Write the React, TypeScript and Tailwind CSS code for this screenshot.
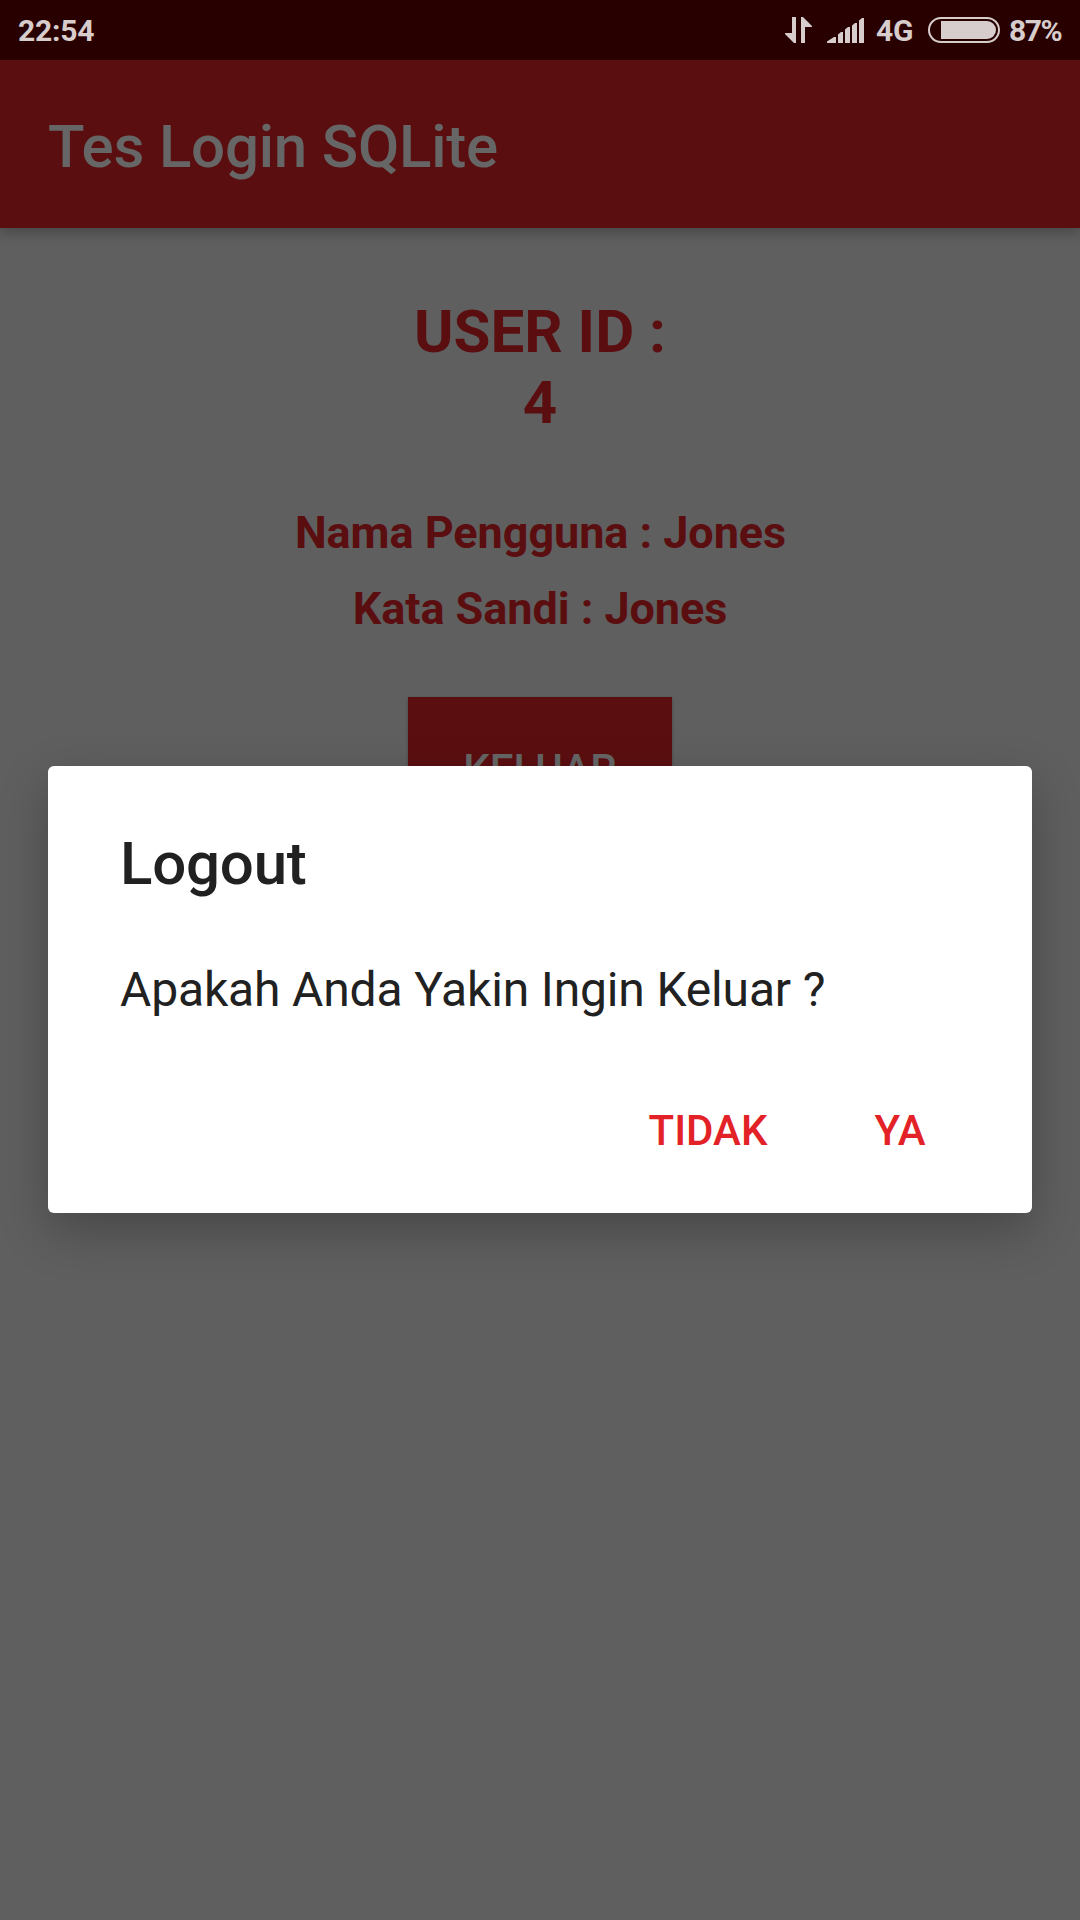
function StatusBar() {
  return (
    <div className="flex h-[60px] items-center justify-between bg-[#290000] pr-[17px] pl-[18px] text-[30px] leading-[60px] font-bold tracking-[-0.2px] text-[#d7cdcd]">
      <span className="pt-px">22:54</span>
      <div className="flex items-center whitespace-nowrap">
        <svg className="mr-[15px] h-[26px] w-[27px]" viewBox="0 0 27 26" fill="currentColor">
          <path d="M7 0h4v26h-2L0 17v-1h7z" />
          <path d="M20 26h-4V0h2l9 9v1h-7z" />
        </svg>
        <svg className="mr-[12px] h-[26px] w-[37px]" viewBox="0 0 37 26" fill="currentColor">
          <path d="M0 26v-1.500l7-4.500h2v6z" />
          <path d="M11 26v-8.500l3-2.500h2v11z" />
          <path d="M18 26V12.500l3-2.500h2v16z" />
          <path d="M25 26V8.500l3-2.500h2v20z" />
          <path d="M32 26V3.500l3-2.500h2v25z" />
        </svg>
        <span className="w-[38px] pt-px">4G</span>
        <svg className="mr-[9px] ml-[14px] h-[26px] w-[72px]" viewBox="0 0 72 26">
          <rect x="1" y="1" width="70" height="24" rx="12" fill="none" stroke="currentColor" strokeWidth="2" />
          <path d="M13 4h46a9 9 0 0 1 0 18H13z" fill="currentColor" />
        </svg>
        <span className="w-[54px] pt-px tracking-[-1.500px]">87%</span>
      </div>
    </div>
  );
}

function LogoutDialog() {
  return (
    <div className="absolute top-[766px] left-[48px] flex h-[447px] w-[984px] flex-col rounded-[6px] bg-white text-[#212121] shadow-[0_18px_48px_rgba(0,0,0,0.25)]">
      <h2 className="mt-[62px] px-[72px] text-[60px] leading-[72px] font-medium tracking-[-0.2px]">Logout</h2>
      <p className="mt-[62px] px-[72px] text-[48px] leading-[56px] tracking-[-0.16px]">Apakah Anda Yakin Ingin Keluar ?</p>
      <div className="mt-[41px] flex justify-end pr-[36px] text-[42px] leading-[144px] font-medium text-[#e32227]">
        <button className="h-[144px] w-[192px]">TIDAK</button>
        <button className="h-[144px] w-[192px]">YA</button>
      </div>
    </div>
  );
}

export default function App() {
  return (
    <div className="relative h-[1920px] w-[1080px] overflow-hidden bg-[#5f5f5f] font-['Roboto',sans-serif]">
      <StatusBar />
      <header className="flex h-[168px] items-center bg-[#5b0e10] px-[48px] pt-[5px] shadow-[0_5px_12px_rgba(0,0,0,0.25)]">
        <h1 className="text-[60px] leading-[70px] font-medium tracking-[-0.2px] text-[#666666]">Tes Login SQLite</h1>
      </header>
      <main className="flex flex-col items-center pt-[68px] font-bold text-[#5b0e10]">
        <div className="text-center text-[60px] leading-[71px]">
          <p>USER ID :</p>
          <p>4</p>
        </div>
        <p className="mt-[68px] pl-px text-[45px] leading-[53px] tracking-[-0.06px]">Nama Pengguna : Jones</p>
        <p className="mt-[23px] text-[45px] leading-[53px] tracking-[-0.06px]">Kata Sandi : Jones</p>
        <button className="mt-[62px] h-[144px] w-[264px] bg-[#5b0e10] text-[42px] font-medium text-[#666666] shadow-[0_1px_3px_rgba(0,0,0,0.3)]">
          KELUAR
        </button>
      </main>
      <LogoutDialog />
    </div>
  );
}
